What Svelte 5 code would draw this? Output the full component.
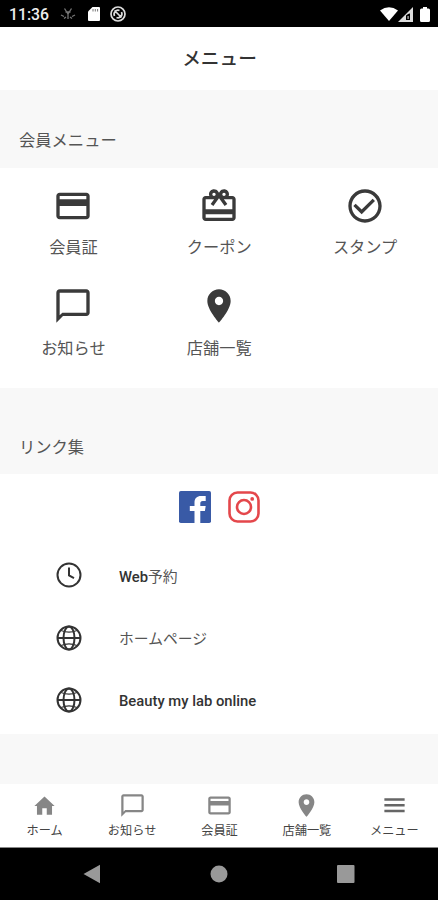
<script>
  const icons = {
    card: 'M20 4H4c-1.11 0-2 .89-2 2v12c0 1.11.89 2 2 2h16c1.11 0 2-.89 2-2V6c0-1.11-.89-2-2-2zm0 14H4v-6h16v6zm0-10H4V6h16v2z',
    gift: 'M20 6h-2.18c.11-.31.18-.65.18-1 0-1.66-1.34-3-3-3-1.05 0-1.96.54-2.5 1.35l-.5.67-.5-.68C10.96 2.54 10.05 2 9 2 7.34 2 6 3.34 6 5c0 .35.07.69.18 1H4c-1.11 0-1.99.89-1.99 2L2 19c0 1.11.89 2 2 2h16c1.11 0 2-.89 2-2V8c0-1.11-.89-2-2-2zm-5-2c.55 0 1 .45 1 1s-.45 1-1 1-1-.45-1-1 .45-1 1-1zM9 4c.55 0 1 .45 1 1s-.45 1-1 1-1-.45-1-1 .45-1 1-1zm11 15H4v-2h16v2zm0-5H4V8h5.08L7 10.83 8.62 12 11 8.76l1-1.36 1 1.36L15.38 12 17 10.83 14.92 8H20v6z',
    check: 'M16.59 7.58L10 14.17l-3.59-3.58L5 12l5 5 8-8zM12 2C6.48 2 2 6.48 2 12s4.48 10 10 10 10-4.48 10-10S17.52 2 12 2zm0 18c-4.42 0-8-3.58-8-8s3.58-8 8-8 8 3.58 8 8-3.58 8-8 8z',
    chat: 'M20 2H4c-1.1 0-2 .9-2 2v18l4-4h14c1.1 0 2-.9 2-2V4c0-1.1-.9-2-2-2zm0 14H5.6L4 17.6V4h16v12z',
    pin: 'M12 2C8.13 2 5 5.13 5 9c0 5.25 7 13 7 13s7-7.75 7-13c0-3.87-3.13-7-7-7zm0 9.5c-1.38 0-2.5-1.12-2.5-2.5s1.12-2.5 2.5-2.5 2.5 1.12 2.5 2.5-1.12 2.5-2.5 2.5z',
    home: 'M10 20.2v-5.7h4v5.7h4.7v-7.8H21L12 4l-9 8.4h2.3v7.8z',
    menu: 'M3 18h18v-2.2H3zm0-5.1h18v-2.2H3zM3 5.600v2.200h18V5.600z',
  };

  const menus = [
    { label: '会員証', icon: 'card' },
    { label: 'クーポン', icon: 'gift' },
    { label: 'スタンプ', icon: 'check' },
    { label: 'お知らせ', icon: 'chat' },
    { label: '店舗一覧', icon: 'pin' },
  ];

  // latin text is drawn heavier than the japanese after it
  const links = [
    { latin: 'Web', label: '予約', icon: 'clock' },
    { latin: '', label: 'ホームページ', icon: 'globe' },
    { latin: 'Beauty my lab online', label: '', icon: 'globe' },
  ];

  const tabs = [
    { label: 'ホーム', icon: 'home' },
    { label: 'お知らせ', icon: 'chat' },
    { label: '会員証', icon: 'card' },
    { label: '店舗一覧', icon: 'pin' },
    { label: 'メニュー', icon: 'menu' },
  ];
</script>

<div class="screen">
  <div class="status">
    <span class="time">11:36</span>
    <svg class="debug" width="16" height="16" viewBox="0 0 16 16">
      <path d="M4.5 2.5L8 8l3.500-5.500M8 8v5M1 9l3 1.500M15 9l-3 1.500M5.500 6h5M4 12.500l2-1.500M12 12.500l-2-1.500" />
    </svg>
    <svg class="sd" width="12" height="14" viewBox="0 0 12 14">
      <path fill="#fff" d="M4.500 0H11q1 0 1 1v12q0 1-1 1H1q-1 0-1-1V4.500z" />
      <path stroke="#777" d="M5 2v2.500M7.300 2v2.500M9.600 2v2.500" />
    </svg>
    <svg class="sync" width="16" height="16" viewBox="0 0 16 16">
      <circle cx="8" cy="8" r="7" />
      <path d="M4.500 10a4 4 0 0 1 5-5.500M11.500 6a4 4 0 0 1-5 5.500M4.500 4.500l7 7" />
    </svg>
    <div class="signals">
      <svg width="18" height="14" viewBox="0 0 18 14">
        <path fill="#fff" d="M9 14L0 3.500Q9-3 18 3.500z" />
      </svg>
      <svg width="15" height="15" viewBox="0 0 15 15">
        <path fill="#ddd" d="M15 0v15H0z" />
        <path fill="#000" d="M8 8.500q3-2.500 4-2v6.500H8z" />
        <path fill="#bbb" d="M9.500 9h1.200v3H9.500z" />
      </svg>
      <svg class="battery" width="10" height="15" viewBox="0 0 10 15">
        <path fill="#fff" d="M3 0h4v1.500h1.500q1.500 0 1.500 1.500v10.500q0 1.500-1.500 1.500h-7Q0 15 0 13.500V3q0-1.500 1.500-1.500H3z" />
      </svg>
    </div>
  </div>

  <header>メニュー</header>

  <h2>会員メニュー</h2>
  <section class="menu-grid">
    {#each menus as menu}
      <div class="menu-item">
        <svg width="40" height="40" viewBox="0 0 24 24"><path d={icons[menu.icon]} /></svg>
        <span>{menu.label}</span>
      </div>
    {/each}
  </section>

  <h2 class="links-title">リンク集</h2>
  <section class="links">
    <div class="sns">
      <svg width="32" height="32" viewBox="0 0 32 32">
        <rect width="32" height="32" rx="1.8" fill="#395aa6" />
        <path fill="#fff" d="M15.500 32V20h-4.700v-5h4.700v-3.500c0-4.300 2.500-6.500 6.500-6.500h4.700v5h-3c-1.800 0-2.400 1-2.400 2.300V15h5.400l-.8 5h-4.600v12z" />
      </svg>
      <svg class="instagram" width="32" height="32" viewBox="0 0 32 32">
        <rect x="1.500" y="1.500" width="29" height="29" rx="8" />
        <circle cx="16" cy="16" r="7" />
        <circle class="dot" cx="24.200" cy="7.900" r="1.900" />
      </svg>
    </div>
    {#each links as link}
      <div class="link">
        <svg width="26" height="26" viewBox="0 0 26 26">
          <circle cx="13" cy="13" r="11.5" />
          {#if link.icon === 'clock'}
            <path d="M13 5.500v8l5 2.600" />
          {:else}
            <path d="M1.500 13h23" />
            <ellipse cx="13" cy="13" rx="5.500" ry="11.500" />
            <path d="M5 5.500q8 3.400 16 0M5 20.500q8-3.400 16 0" class="thin" />
          {/if}
        </svg>
        <p><b>{link.latin}</b>{link.label}</p>
      </div>
    {/each}
  </section>

  <nav class="tabs">
    {#each tabs as tab}
      <div class="tab">
        <svg class={tab.icon} width="27" height="27" viewBox="0 0 24 24"><path d={icons[tab.icon]} /></svg>
        <span>{tab.label}</span>
      </div>
    {/each}
  </nav>

  <div class="android">
    <svg width="18" height="20" viewBox="0 0 18 20"><path d="M.5 10L17 .8v18.4z" /></svg>
    <svg width="18" height="18" viewBox="0 0 18 18"><circle cx="9" cy="9" r="8.5" /></svg>
    <svg width="18" height="18" viewBox="0 0 18 18"><rect width="17.500" height="18" rx="1" /></svg>
  </div>
</div>

<style>
  :global(body) {
    margin: 0;
  }

  .screen {
    width: 438px;
    height: 900px;
    display: flex;
    flex-direction: column;
    background: #f8f8f8;
    color: #555;
    font-family: Roboto, "Noto Sans CJK JP", sans-serif;
    overflow: hidden;
  }

  svg {
    display: block;
    flex: none;
  }

  .status {
    box-sizing: border-box;
    height: 27px;
    flex: none;
    display: flex;
    align-items: center;
    padding: 1px 8px 0 9px;
    background: #000;
    color: #eee;
  }

  .time {
    width: 51px;
    font-size: 15.8px;
    font-weight: 500;
    line-height: 24px;
    padding-top: 2px;
  }

  .debug {
    fill: none;
    stroke: #777;
    stroke-width: 1.3;
  }

  .sd {
    margin-left: 12px;
  }

  .sync {
    margin-left: 10px;
    fill: none;
    stroke: #ddd;
    stroke-width: 1.7;
  }

  .signals {
    display: flex;
    align-items: center;
    margin-left: auto;
  }

  .battery {
    margin-left: 7px;
  }

  header {
    height: 62.5px;
    flex: none;
    padding-left: 1px;
    background: #fff;
    color: #333;
    font-size: 18.7px;
    font-weight: 500;
    line-height: 64px;
    text-align: center;
  }

  h2 {
    box-sizing: border-box;
    height: 78.5px;
    flex: none;
    margin: 0;
    padding: 37.5px 0 0 19px;
    font-size: 16.3px;
    font-weight: 400;
    line-height: 28px;
  }

  .menu-grid {
    box-sizing: border-box;
    height: 220px;
    flex: none;
    display: grid;
    grid-template-columns: repeat(3, 1fr);
    grid-auto-rows: 100.5px;
    padding: 17.5px 0 0 0.5px;
    background: #fff;
  }

  .menu-item {
    display: flex;
    flex-direction: column;
    align-items: center;
    font-size: 16.2px;
    line-height: 24px;
  }

  .menu-item svg {
    margin-bottom: 10.5px;
    fill: #3a3a3a;
  }

  .links-title {
    height: 86px;
    padding-top: 46px;
  }

  .links {
    box-sizing: border-box;
    height: 260px;
    flex: none;
    padding-top: 17px;
    background: #fff;
  }

  .sns {
    display: flex;
    justify-content: center;
    gap: 17px;
    margin-bottom: 21px;
    padding-left: 1px;
  }

  .instagram {
    fill: none;
    stroke: #e4474b;
    stroke-width: 2.6;
  }

  .instagram .dot {
    fill: #e4474b;
    stroke: none;
  }

  .link {
    height: 62.4px;
    display: flex;
    align-items: center;
    padding-left: 55.5px;
    font-size: 14.8px;
  }

  .link svg {
    fill: none;
    stroke: #333;
    stroke-width: 2;
  }

  .link .thin {
    stroke-width: 1.3;
  }

  .link p {
    margin: 0 0 0 37.5px;
    padding-top: 3px;
    line-height: 22px;
  }

  .link b {
    color: #333;
    font-weight: 500;
  }

  .tabs {
    height: 64px;
    flex: none;
    display: flex;
    box-sizing: border-box;
    margin-top: auto;
    padding: 8px 0 0 1px;
    border-bottom: 1px solid #888;
    background: #fff;
  }

  .tab {
    flex: 1;
    display: flex;
    flex-direction: column;
    align-items: center;
    color: #444;
    font-size: 12.2px;
    line-height: 20px;
  }

  .tab svg {
    margin-bottom: 2px;
    fill: #868686;
  }

  .tab .menu {
    fill: #666;
  }

  .android {
    height: 52px;
    flex: none;
    display: flex;
    justify-content: center;
    align-items: center;
    gap: 109px;
    background: #000;
    fill: #999;
  }
</style>
